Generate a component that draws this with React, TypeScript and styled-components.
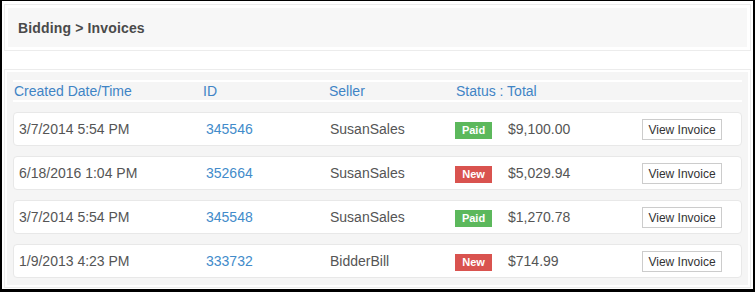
import styled, { createGlobalStyle } from 'styled-components'

const GlobalStyle = createGlobalStyle`
  html, body {
    margin: 0;
    padding: 0;
    background: #fff;
    font-family: "Liberation Sans", Arial, sans-serif;
  }
`

type Invoice = {
  created: string
  id: string
  seller: string
  status: 'Paid' | 'New'
  total: string
}

const invoices: Invoice[] = [
  { created: '3/7/2014 5:54 PM', id: '345546', seller: 'SusanSales', status: 'Paid', total: '$9,100.00' },
  { created: '6/18/2016 1:04 PM', id: '352664', seller: 'SusanSales', status: 'New', total: '$5,029.94' },
  { created: '3/7/2014 5:54 PM', id: '345548', seller: 'SusanSales', status: 'Paid', total: '$1,270.78' },
  { created: '1/9/2013 4:23 PM', id: '333732', seller: 'BidderBill', status: 'New', total: '$714.99' },
]

const Frame = styled.div`
  width: 755px;
  height: 292px;
  box-sizing: border-box;
  border: solid #000;
  border-width: 1px 2px 3px 2px;
  padding: 3px 2px 1px 2px;
  display: flex;
  flex-direction: column;
  gap: 18px;
`

const Panel = styled.div<{ $pad: number }>`
  border: 1px solid #ececec;
  padding: ${(p) => p.$pad}px;
  background: #fff;
`

const TitleBar = styled.div`
  height: 39px;
  background: #f7f7f7;
  display: flex;
  align-items: center;
  padding-left: 10px;
  font-size: 14px;
  font-weight: bold;
  letter-spacing: 0.15px;
  color: #4a4a4a;
`

const TableFill = styled.div`
  height: 213px;
  box-sizing: border-box;
  background: #f5f5f5;
  padding: 8px 6px 7px 6px;
  display: flex;
  flex-direction: column;
`

const HeadRow = styled.div`
  display: grid;
  grid-template-columns: 189px 126px 127px 1fr;
  align-items: center;
  height: 18px;
  border-top: 2px solid #fff;
  border-bottom: 2px solid #fff;
  padding-left: 1px;
  margin-bottom: 10px;
  font-size: 14px;
  color: #3f84c5;
`

const Rows = styled.div`
  display: flex;
  flex-direction: column;
  gap: 10px;
`

const Row = styled.div`
  display: grid;
  grid-template-columns: 187px 124px 125px 53px 134px 80px;
  align-items: center;
  height: 34px;
  box-sizing: border-box;
  padding-left: 5px;
  background: #fff;
  border: 1px solid #e8e8e8;
  border-radius: 4px;
  font-size: 14px;
  color: #555;
`

const IdLink = styled.a`
  color: #428bca;
  text-decoration: none;
`

const Badge = styled.span<{ $status: 'Paid' | 'New' }>`
  width: 37px;
  height: 17px;
  margin-top: 2px;
  display: flex;
  align-items: center;
  justify-content: center;
  font-size: 11px;
  font-weight: bold;
  color: #fff;
  background: ${(p) => (p.$status === 'Paid' ? '#5cb85c' : '#d9534f')};
`

const ViewButton = styled.button`
  width: 80px;
  height: 21px;
  margin-top: 1px;
  padding: 0;
  background: #fff;
  border: 1px solid #cccccc;
  border-radius: 0;
  font-family: "Liberation Sans", Arial, sans-serif;
  font-size: 12px;
  color: #333;
`

const App = () => {
  return (
    <>
      <GlobalStyle />
      <Frame>
        <Panel $pad={3}>
          <TitleBar>Bidding &gt; Invoices</TitleBar>
        </Panel>
        <Panel $pad={2}>
          <TableFill>
            <HeadRow>
              <span>Created Date/Time</span>
              <span>ID</span>
              <span>Seller</span>
              <span>Status : Total</span>
            </HeadRow>
            <Rows>
              {invoices.map((inv, idx) => (
                <Row key={idx}>
                  <span>{inv.created}</span>
                  <IdLink href='#'>{inv.id}</IdLink>
                  <span>{inv.seller}</span>
                  <Badge $status={inv.status}>{inv.status}</Badge>
                  <span>{inv.total}</span>
                  <ViewButton>View Invoice</ViewButton>
                </Row>
              ))}
            </Rows>
          </TableFill>
        </Panel>
      </Frame>
    </>
  )
}

export default App
